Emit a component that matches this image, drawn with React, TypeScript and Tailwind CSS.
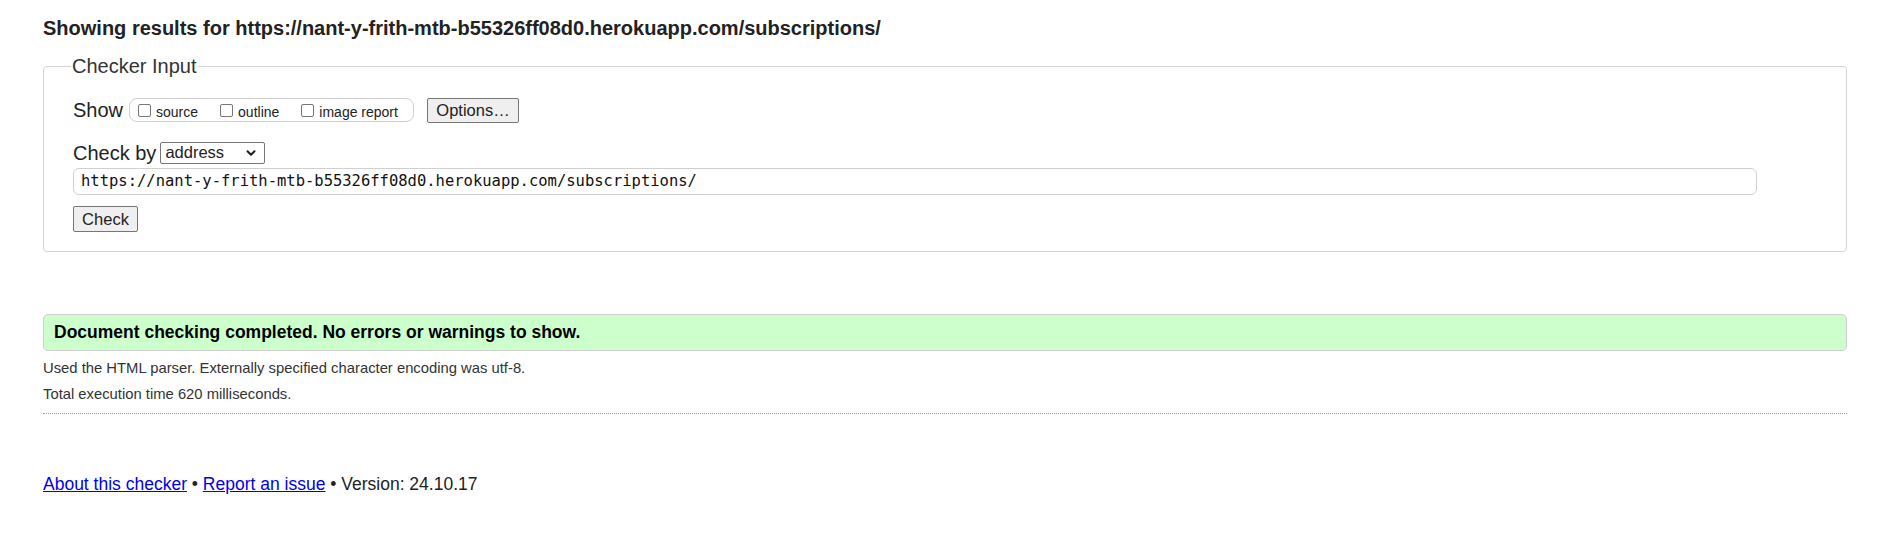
import { ChevronDown } from 'lucide-react';

const url = 'https://nant-y-frith-mtb-b55326ff08d0.herokuapp.com/subscriptions/';

function Box({ label, className }: { label: string; className?: string }) {
  return (
    <label className={`flex items-center gap-[5px] ${className ?? ''}`}>
      <span className="block w-[13px] h-[13px] border border-[#767676] rounded-[2px] bg-white" />
      <span className="text-[14px] leading-none mt-[3px]">{label}</span>
    </label>
  );
}

export default function App() {
  return (
    <div className="min-h-screen bg-white text-[#222] font-['Liberation_Sans',Arial,sans-serif]">
      <div className="ml-[43px] w-[1804px]">
        <h2 className="pt-[16px] text-[20px] font-bold leading-[1.2]">
          Showing results for {url}
        </h2>

        <fieldset className="mt-[14px] border border-[#d4d4d4] rounded-[4px] h-[198px]">
          <legend className="ml-[27px] px-px text-[20px] leading-[1.2] text-[#333]">Checker Input</legend>

          <div className="pl-[29px] pt-[19px]">
            <div className="flex items-center h-[26px]">
              <span className="text-[20px] leading-none">Show</span>
              <div className="ml-[6px] flex items-center h-[24px] w-[285px] border border-[#cfcfcf] rounded-[8px] pl-[8px]">
                <Box label="source" />
                <Box label="outline" className="ml-[22px]" />
                <Box label="image report" className="ml-[22px]" />
              </div>
              <button className="ml-[13px] h-[25px] w-[92px] border border-[#767676] rounded-[2px] bg-[#efefef] text-[16.5px] leading-none">
                Options…
              </button>
            </div>

            <div className="flex items-center mt-[18px] h-[23px]">
              <span className="text-[20px] leading-none">Check by</span>
              <div className="ml-[4px] flex items-center justify-between h-[22px] w-[105px] border border-[#767676] rounded-[2px] pl-[4px] pr-[6px]">
                <span className="text-[16.5px] leading-none">address</span>
                <ChevronDown className="w-[14px] h-[14px]" strokeWidth={3.5} />
              </div>
            </div>

            <div className="mt-[4px] mr-[89px] h-[27px] border border-[#d0d0d0] rounded-[6px] flex items-center pl-[7px]">
              <span className="font-['DejaVu_Sans_Mono',monospace] text-[15.5px] text-[#111]">{url}</span>
            </div>

            <button className="mt-[11px] h-[26px] w-[65px] border border-[#767676] rounded-[2px] bg-[#efefef] text-[16.5px] leading-none">
              Check
            </button>
          </div>
        </fieldset>

        <div className="mt-[62px] h-[37px] bg-[#ccffcc] border border-[#cfcfcf] rounded-[5px] flex items-center pl-[10px]">
          <p className="text-[17.5px] font-bold text-black">Document checking completed. No errors or warnings to show.</p>
        </div>

        <p className="mt-[4px] text-[14.8px] leading-[26px] text-[#333]">
          Used the HTML parser. Externally specified character encoding was utf-8.
        </p>
        <p className="text-[14.8px] leading-[26px] text-[#333]">Total execution time 620 milliseconds.</p>

        <div className="mt-[6px] border-t border-dotted border-[#999]" />

        <p className="mt-[60px] text-[17.5px] leading-[1.2] text-[#222]">
          <a href="#" className="text-[#0000ee] underline">About this checker</a> •{' '}
          <a href="#" className="text-[#0000ee] underline">Report an issue</a> • Version: 24.10.17
        </p>
      </div>
    </div>
  );
}
